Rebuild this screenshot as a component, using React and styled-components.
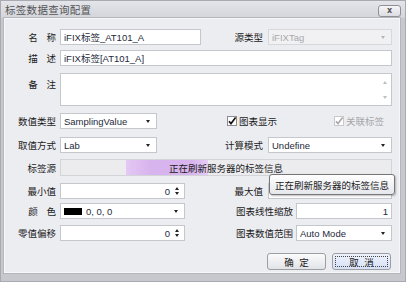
import React from "react";
import styled, { createGlobalStyle, css } from "styled-components";

const GlobalStyle = createGlobalStyle`
  html, body {
    margin: 0;
    padding: 0;
    background: #c8cad0;
  }
  * {
    box-sizing: border-box;
  }
`;

const FONT = `"Liberation Sans", "Noto Sans CJK SC", sans-serif`;

// 창 전체
const Window = styled.div`
  width: 406px;
  height: 282px;
  background: #c6c8ce;
  border: 1px solid #a8aab0;
  padding: 0 5px 8px 3px;
  display: flex;
  flex-direction: column;
  font-family: ${FONT};
  font-size: 9.5px;
  color: #1a1a1a;
`;

// 제목 표시줄
const TitleBar = styled.div`
  height: 17px;
  display: flex;
  align-items: center;
  justify-content: space-between;
  margin: 0 -5px 0 -3px;
  padding: 0 4px 0 4px;
  background: linear-gradient(#e4e5ea, #d3d5db);
`;

const TitleText = styled.span`
  font-size: 10.5px;
  color: #555;
  letter-spacing: 0.3px;
`;

const CloseButton = styled.div`
  width: 23px;
  height: 12px;
  margin-top: 2px;
  border: 1px solid #8f9197;
  border-radius: 3px;
  background: linear-gradient(#f6f6f8, #dcdde2);
  display: flex;
  align-items: center;
  justify-content: center;
  color: #555;
  font-family: "DejaVu Sans", sans-serif;
  font-size: 8px;
  font-weight: bold;
  line-height: 1;
`;

// 본문 패널
const Panel = styled.div`
  position: relative;
  flex: 1;
  background: #ecedf1;
  border: 1px solid #f7f7f9;
  outline: 1px solid #b4b6bc;
  padding: 10px 7px 0 8px;
  display: flex;
  flex-direction: column;
`;

const Row = styled.div`
  display: flex;
  align-items: center;
  height: ${(p) => p.$h || 16}px;
  margin-top: ${(p) => p.$mt || 0}px;
`;

const Half = styled.div`
  display: flex;
  align-items: center;
  width: ${(p) => (p.$w ? `${p.$w}px` : "auto")};
  flex: ${(p) => (p.$w ? "none" : 1)};
  min-width: 0;
  height: 100%;
`;

const Label = styled.div`
  width: ${(p) => p.$w || 43}px;
  flex: none;
  text-align: right;
  margin-right: ${(p) => p.$gap || 4}px;
  white-space: nowrap;
  align-self: ${(p) => (p.$top ? "flex-start" : "center")};
  margin-top: ${(p) => (p.$top ? 4 : 0)}px;
  word-spacing: ${(p) => p.$ws || 0}px;
`;

const fieldBase = css`
  height: 100%;
  border: 1px solid #c5c7cd;
  background: #fff;
  display: flex;
  align-items: center;
  padding: 0 3px;
  color: #1e2a3a;
  white-space: nowrap;
  overflow: hidden;
`;

const Field = styled.div`
  ${fieldBase}
  width: ${(p) => (p.$w ? `${p.$w}px` : "auto")};
  flex: ${(p) => (p.$w ? "none" : 1)};
  ${(p) =>
    p.$disabled &&
    css`
      background: #f1f1f3;
      border-color: #d6d8dc;
      color: #a8a8ac;
    `}
`;

const FieldText = styled.span`
  flex: 1;
  text-align: ${(p) => (p.$right ? "right" : "left")};
`;

const Arrow = styled.span`
  width: 0;
  height: 0;
  margin: 0 3px 0 4px;
  border-left: 2.5px solid transparent;
  border-right: 2.5px solid transparent;
  border-top: 3px solid ${(p) => (p.$dim ? "#b4b4b8" : "#222")};
  flex: none;
`;

const Spinner = styled.span`
  display: flex;
  flex-direction: column;
  gap: 2px;
  margin: 0 2px 0 5px;
  flex: none;

  &::before,
  &::after {
    content: "";
    width: 0;
    height: 0;
    border-left: 2.5px solid transparent;
    border-right: 2.5px solid transparent;
  }
  &::before {
    border-bottom: 3px solid #222;
  }
  &::after {
    border-top: 3px solid #222;
  }
`;

// 비고 입력란
const TextArea = styled.div`
  flex: 1;
  height: 100%;
  border: 1px solid #c5c7cd;
  background: #fff;
  display: flex;
  justify-content: flex-end;
`;

const ScrollTrack = styled.div`
  width: 12px;
  display: flex;
  flex-direction: column;
  justify-content: space-between;
  align-items: center;
  padding: 7px 0 6px;

  &::before,
  &::after {
    content: "";
    width: 0;
    height: 0;
    border-left: 2.5px solid transparent;
    border-right: 2.5px solid transparent;
  }
  &::before {
    border-bottom: 3px solid #bdbdc2;
  }
  &::after {
    border-top: 3px solid #bdbdc2;
  }
`;

// 체크박스
const Check = styled.label`
  display: flex;
  align-items: center;
  gap: 2px;
  flex: none;
  white-space: nowrap;
  margin-left: ${(p) => p.$ml || 0}px;
  color: ${(p) => (p.$disabled ? "#a6a6aa" : "#1a1a1a")};
`;

const CheckBox = ({ disabled }) => (
  <svg width="10" height="10" viewBox="0 0 10 10">
    <rect x="0.5" y="0.5" width="9" height="9" fill="#fff" stroke={disabled ? "#c8c8cc" : "#8a8c92"} />
    <path d="M2 5.2 L4 7.6 L8.6 1.6" fill="none" stroke={disabled ? "#aaaaae" : "#111"} strokeWidth="1.6" />
  </svg>
);

// 진행 표시줄
const Progress = styled.div`
  position: relative;
  flex: 1;
  height: 100%;
  border: 1px solid #d2d4d8;
  background: #ececef;
  display: flex;
  align-items: center;
  justify-content: center;
`;

const ProgressFill = styled.div`
  position: absolute;
  top: 0;
  bottom: 0;
  left: 65px;
  width: 82px;
  background: linear-gradient(90deg, #e4c8f4, #d8b4ee 30%, #d8b4ee 80%, #e6cdf5);
`;

const ProgressText = styled.span`
  position: relative;
  color: #1a1a1a;
`;

const Swatch = styled.span`
  width: 18px;
  height: 7px;
  background: #000;
  margin-right: 4px;
  flex: none;
`;

// 버튼 영역
const ButtonRow = styled.div`
  display: flex;
  justify-content: flex-end;
  gap: 6px;
  margin-top: 12px;
  padding-right: 1px;
`;

const Button = styled.div`
  width: 59px;
  height: 17px;
  border: 1px solid #9c9ea4;
  border-radius: 3px;
  background: ${(p) =>
    p.$focused
      ? "linear-gradient(#eef2fb, #d6e0f6)"
      : "linear-gradient(#fbfbfc, #e2e3e7)"};
  display: flex;
  align-items: center;
  justify-content: center;
  word-spacing: 3px;
  position: relative;

  ${(p) =>
    p.$focused &&
    css`
      &::after {
        content: "";
        position: absolute;
        inset: 2px;
        border: 1px dotted #444;
      }
    `}
`;

// 툴팁
const Tooltip = styled.div`
  position: absolute;
  left: 264px;
  top: 155px;
  width: 126px;
  height: 21px;
  border: 1px solid #767676;
  border-radius: 3px;
  background: linear-gradient(#ffffff, #e6e7ec);
  box-shadow: 1px 1px 2px rgba(0, 0, 0, 0.25);
  display: flex;
  align-items: center;
  justify-content: center;
  color: #1a1a1a;
`;

export default function App() {
  return (
    <>
      <GlobalStyle />
      <Window>
        <TitleBar>
          <TitleText>标签数据查询配置</TitleText>
          <CloseButton>x</CloseButton>
        </TitleBar>
        <Panel>
          <Row>
            <Half $w={210}>
              <Label $ws={6}>名 称</Label>
              <Field $w={141}>iFIX标签_AT101_A</Field>
            </Half>
            <Half>
              <Label $w={40} $gap={5}>源类型</Label>
              <Field $disabled>
                <FieldText>iFIXTag</FieldText>
                <Arrow $dim />
              </Field>
            </Half>
          </Row>
          <Row $mt={5}>
            <Label $ws={6}>描 述</Label>
            <Field>iFIX标签[AT101_A]</Field>
          </Row>
          <Row $mt={7} $h={33}>
            <Label $ws={6} $top>备 注</Label>
            <TextArea>
              <ScrollTrack />
            </TextArea>
          </Row>
          <Row $mt={7}>
            <Half $w={210}>
              <Label>数值类型</Label>
              <Field $w={97}>
                <FieldText>SamplingValue</FieldText>
                <Arrow />
              </Field>
            </Half>
            <Half>
              <Check $ml={4}>
                <CheckBox />
                图表显示
              </Check>
              <Check $ml={57} $disabled>
                <CheckBox disabled />
                关联标签
              </Check>
            </Half>
          </Row>
          <Row $mt={8}>
            <Half $w={210}>
              <Label>取值方式</Label>
              <Field $w={97}>
                <FieldText>Lab</FieldText>
                <Arrow />
              </Field>
            </Half>
            <Half>
              <Label $w={40} $gap={5}>计算模式</Label>
              <Field>
                <FieldText>Undefine</FieldText>
                <Arrow />
              </Field>
            </Half>
          </Row>
          <Row $mt={6} $h={17}>
            <Label>标签源</Label>
            <Progress>
              <ProgressFill />
              <ProgressText>正在刷新服务器的标签信息</ProgressText>
            </Progress>
          </Row>
          <Row $mt={7}>
            <Half $w={210}>
              <Label>最小值</Label>
              <Field $w={125}>
                <FieldText $right>0</FieldText>
                <Spinner />
              </Field>
            </Half>
            <Half>
              <Label $w={40} $gap={5}>最大值</Label>
              <Field>
                <FieldText $right />
                <Spinner />
              </Field>
            </Half>
          </Row>
          <Row $mt={4}>
            <Half $w={210}>
              <Label $ws={6}>颜 色</Label>
              <Field $w={125}>
                <Swatch />
                <FieldText>0, 0, 0</FieldText>
                <Arrow />
              </Field>
            </Half>
            <Half>
              <Label $w={70} $gap={3}>图表线性缩放</Label>
              <Field>
                <FieldText $right>1</FieldText>
              </Field>
            </Half>
          </Row>
          <Row $mt={6}>
            <Half $w={210}>
              <Label>零值偏移</Label>
              <Field $w={125}>
                <FieldText $right>0</FieldText>
                <Spinner />
              </Field>
            </Half>
            <Half>
              <Label $w={70} $gap={3}>图表数值范围</Label>
              <Field>
                <FieldText>Auto Mode</FieldText>
                <Arrow />
              </Field>
            </Half>
          </Row>
          <ButtonRow>
            <Button>确 定</Button>
            <Button $focused>取 消</Button>
          </ButtonRow>
          <Tooltip>正在刷新服务器的标签信息</Tooltip>
        </Panel>
      </Window>
    </>
  );
}
